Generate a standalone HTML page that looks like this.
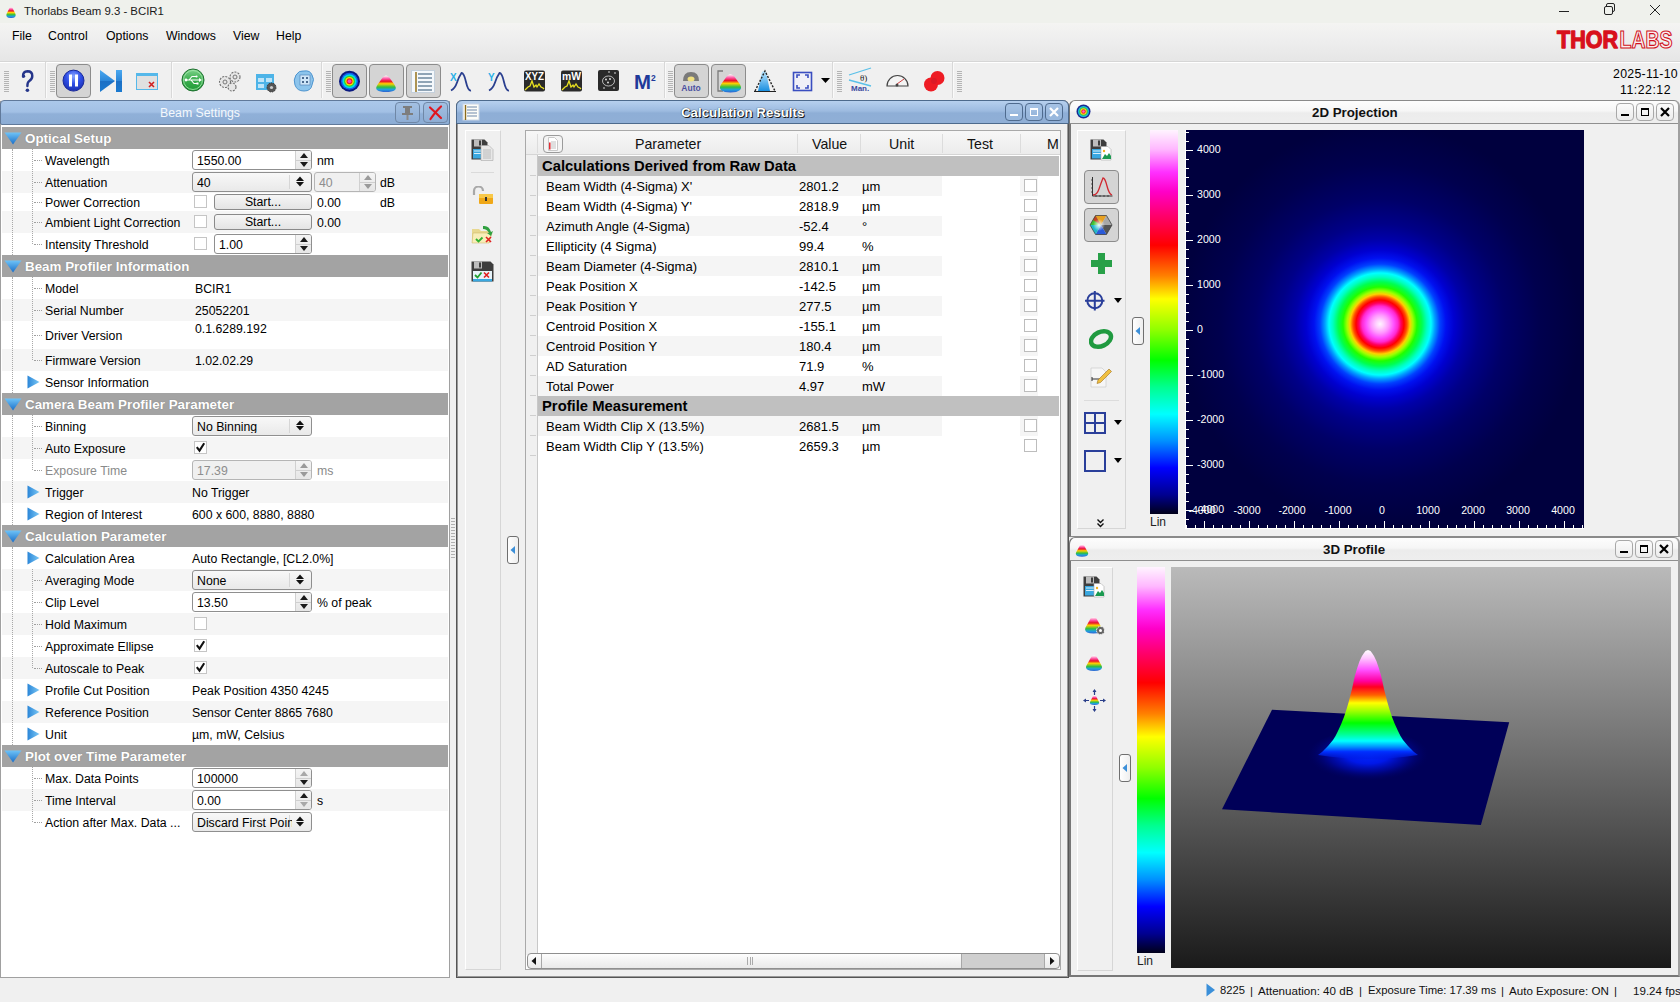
<!DOCTYPE html><html><head><meta charset="utf-8"><style>
*{margin:0;padding:0;box-sizing:border-box}
html,body{width:1680px;height:1002px;overflow:hidden;background:#f0f0f0;font-family:"Liberation Sans",sans-serif;color:#000}
.ab{position:absolute}
.t{position:absolute;white-space:nowrap;line-height:1}
#titlebar{left:0;top:0;width:1680px;height:23px;background:#eff1ec}
#menubar{left:0;top:23px;width:1680px;height:38px;background:linear-gradient(#f4f4f2,#eeeeee 45%,#e6e6e6)}
#toolbar{left:0;top:61px;width:1680px;height:40px;background:#f0f0f0;border-top:1px solid #d6d6d6;box-shadow:inset 0 1px 0 #fff}
.mi{position:absolute;top:30px;font-size:12.3px;color:#000}
.grip{position:absolute;width:5px;background:repeating-linear-gradient(#b0b0b0 0 1px,transparent 1px 3px)}
.tsep{position:absolute;width:1px;top:64px;height:33px;background:#d4d4d4;border-right:1px solid #fff}
.tbtn{position:absolute;top:64px;width:35px;height:34px;border:1px solid #a9a9a9;border-radius:4px;background:linear-gradient(#dcdcdc,#d2d2d2)}
.sec{position:absolute;left:2px;width:446px;height:22px;background:#a3a3a3}
.sec .st{position:absolute;left:23px;top:5px;font-size:13.4px;font-weight:bold;color:#fff;text-shadow:0 0 1px #777}
.row{position:absolute;left:2px;width:446px}
.lab{position:absolute;left:45px;font-size:12.3px;color:#000;white-space:nowrap}
.val{position:absolute;font-size:12.3px;white-space:nowrap}
.box{position:absolute;border:1px solid #8f8f8f;border-radius:3px;background:#fff}
.cb{position:absolute;width:13px;height:13px;border:1px solid #c5c5c5;background:#fff}
.btn{position:absolute;border:1px solid #8a8a8a;border-radius:3px;background:linear-gradient(#f6f6f6,#e4e4e4);font-size:12.3px;text-align:center}
</style></head><body>
<div id="titlebar" class="ab"></div>
<div class="t" style="left:24px;top:6px;font-size:11.4px;color:#1a1a1a">Thorlabs Beam 9.3 - BCIR1</div>
<svg class="ab" style="left:1550px;top:0" width="130" height="23"><path d="M9 11.5h10" stroke="#222" stroke-width="1"/><rect x="54.5" y="6.5" width="8" height="8" rx="1.5" fill="none" stroke="#222"/><path d="M56.5 6.5v-1.5a1.5 1.5 0 0 1 1.5-1.5h5a1.5 1.5 0 0 1 1.5 1.5v5a1.5 1.5 0 0 1-1.5 1.5h-.5" fill="none" stroke="#222"/><path d="M100 5l10 10M110 5l-10 10" stroke="#222" stroke-width="1"/></svg>
<div id="menubar" class="ab"></div>
<div class="t mi" style="left:12px">File</div>
<div class="t mi" style="left:48px">Control</div>
<div class="t mi" style="left:106px">Options</div>
<div class="t mi" style="left:166px">Windows</div>
<div class="t mi" style="left:233px">View</div>
<div class="t mi" style="left:276px">Help</div>
<div id="toolbar" class="ab"></div>
<div class="t" style="right:2px;top:68px;font-size:12.3px;letter-spacing:0.3px">2025-11-10</div>
<div class="t" style="right:9px;top:84px;font-size:12.3px;letter-spacing:0.5px">11:22:12</div>
<div class="ab" style="left:0;top:101px;width:450px;height:877px;background:#fff;border:1px solid #a0a0a0;border-top:none"></div>
<div class="ab" style="left:0;top:100px;width:450px;height:25px;border:1px solid #60799a;border-radius:4px 4px 2px 2px;background:linear-gradient(#abc8ea,#a2c0e5 48%,#90b0d8 56%,#8cadd5)"></div>
<div class="t" style="left:160px;top:107px;font-size:12.3px;color:#f4f8fc">Beam Settings</div>
<div class="sec" style="top:127px"><div class="st t">Optical Setup</div></div>
<svg class="ab" style="left:4px;top:132px" width="18" height="13"><defs><linearGradient id="tg127" x1="0" y1="0" x2="0" y2="1"><stop offset="0" stop-color="#6fc3f7"/><stop offset="1" stop-color="#1a6fc9"/></linearGradient></defs><path d="M0.5 0.5h17L9 12.5z" fill="url(#tg127)"/></svg>
<div class="row" style="top:149px;height:22px;background:#fff"></div>
<div class="t lab" style="top:155px;color:#000">Wavelength</div>
<div class="ab" style="left:34px;top:160px;width:8px;border-top:1px dotted #a0a0a0"></div>
<div class="row" style="top:171px;height:22px;background:#f5f5f5"></div>
<div class="t lab" style="top:177px;color:#000">Attenuation</div>
<div class="ab" style="left:34px;top:182px;width:8px;border-top:1px dotted #a0a0a0"></div>
<div class="row" style="top:193px;height:18px;background:#fff"></div>
<div class="t lab" style="top:197px;color:#000">Power Correction</div>
<div class="ab" style="left:34px;top:202px;width:8px;border-top:1px dotted #a0a0a0"></div>
<div class="row" style="top:211px;height:22px;background:#f5f5f5"></div>
<div class="t lab" style="top:217px;color:#000">Ambient Light Correction</div>
<div class="ab" style="left:34px;top:222px;width:8px;border-top:1px dotted #a0a0a0"></div>
<div class="row" style="top:233px;height:22px;background:#fff"></div>
<div class="t lab" style="top:239px;color:#000">Intensity Threshold</div>
<div class="ab" style="left:34px;top:244px;width:8px;border-top:1px dotted #a0a0a0"></div>
<div class="sec" style="top:255px"><div class="st t">Beam Profiler Information</div></div>
<svg class="ab" style="left:4px;top:260px" width="18" height="13"><defs><linearGradient id="tg255" x1="0" y1="0" x2="0" y2="1"><stop offset="0" stop-color="#6fc3f7"/><stop offset="1" stop-color="#1a6fc9"/></linearGradient></defs><path d="M0.5 0.5h17L9 12.5z" fill="url(#tg255)"/></svg>
<div class="row" style="top:277px;height:22px;background:#fff"></div>
<div class="t lab" style="top:283px;color:#000">Model</div>
<div class="ab" style="left:34px;top:288px;width:8px;border-top:1px dotted #a0a0a0"></div>
<div class="row" style="top:299px;height:22px;background:#f5f5f5"></div>
<div class="t lab" style="top:305px;color:#000">Serial Number</div>
<div class="ab" style="left:34px;top:310px;width:8px;border-top:1px dotted #a0a0a0"></div>
<div class="row" style="top:321px;height:28px;background:#fff"></div>
<div class="t lab" style="top:330px;color:#000">Driver Version</div>
<div class="ab" style="left:34px;top:335px;width:8px;border-top:1px dotted #a0a0a0"></div>
<div class="row" style="top:349px;height:22px;background:#f5f5f5"></div>
<div class="t lab" style="top:355px;color:#000">Firmware Version</div>
<div class="ab" style="left:34px;top:360px;width:8px;border-top:1px dotted #a0a0a0"></div>
<div class="row" style="top:371px;height:22px;background:#fff"></div>
<div class="t lab" style="top:377px;color:#000">Sensor Information</div>
<svg class="ab" style="left:27px;top:375px" width="13" height="14"><defs><linearGradient id="eg371" x1="0" y1="0" x2="1" y2="0"><stop offset="0" stop-color="#2a86d8"/><stop offset="1" stop-color="#7cc8f5"/></linearGradient></defs><path d="M0.5 0.5L12.5 7L0.5 13.5z" fill="url(#eg371)"/></svg>
<div class="sec" style="top:393px"><div class="st t">Camera Beam Profiler Parameter</div></div>
<svg class="ab" style="left:4px;top:398px" width="18" height="13"><defs><linearGradient id="tg393" x1="0" y1="0" x2="0" y2="1"><stop offset="0" stop-color="#6fc3f7"/><stop offset="1" stop-color="#1a6fc9"/></linearGradient></defs><path d="M0.5 0.5h17L9 12.5z" fill="url(#tg393)"/></svg>
<div class="row" style="top:415px;height:22px;background:#fff"></div>
<div class="t lab" style="top:421px;color:#000">Binning</div>
<div class="ab" style="left:34px;top:426px;width:8px;border-top:1px dotted #a0a0a0"></div>
<div class="row" style="top:437px;height:22px;background:#f5f5f5"></div>
<div class="t lab" style="top:443px;color:#000">Auto Exposure</div>
<div class="ab" style="left:34px;top:448px;width:8px;border-top:1px dotted #a0a0a0"></div>
<div class="row" style="top:459px;height:22px;background:#fff"></div>
<div class="t lab" style="top:465px;color:#8a8a8a">Exposure Time</div>
<div class="ab" style="left:34px;top:470px;width:8px;border-top:1px dotted #a0a0a0"></div>
<div class="row" style="top:481px;height:22px;background:#f5f5f5"></div>
<div class="t lab" style="top:487px;color:#000">Trigger</div>
<svg class="ab" style="left:27px;top:485px" width="13" height="14"><defs><linearGradient id="eg481" x1="0" y1="0" x2="1" y2="0"><stop offset="0" stop-color="#2a86d8"/><stop offset="1" stop-color="#7cc8f5"/></linearGradient></defs><path d="M0.5 0.5L12.5 7L0.5 13.5z" fill="url(#eg481)"/></svg>
<div class="row" style="top:503px;height:22px;background:#fff"></div>
<div class="t lab" style="top:509px;color:#000">Region of Interest</div>
<svg class="ab" style="left:27px;top:507px" width="13" height="14"><defs><linearGradient id="eg503" x1="0" y1="0" x2="1" y2="0"><stop offset="0" stop-color="#2a86d8"/><stop offset="1" stop-color="#7cc8f5"/></linearGradient></defs><path d="M0.5 0.5L12.5 7L0.5 13.5z" fill="url(#eg503)"/></svg>
<div class="sec" style="top:525px"><div class="st t">Calculation Parameter</div></div>
<svg class="ab" style="left:4px;top:530px" width="18" height="13"><defs><linearGradient id="tg525" x1="0" y1="0" x2="0" y2="1"><stop offset="0" stop-color="#6fc3f7"/><stop offset="1" stop-color="#1a6fc9"/></linearGradient></defs><path d="M0.5 0.5h17L9 12.5z" fill="url(#tg525)"/></svg>
<div class="row" style="top:547px;height:22px;background:#fff"></div>
<div class="t lab" style="top:553px;color:#000">Calculation Area</div>
<svg class="ab" style="left:27px;top:551px" width="13" height="14"><defs><linearGradient id="eg547" x1="0" y1="0" x2="1" y2="0"><stop offset="0" stop-color="#2a86d8"/><stop offset="1" stop-color="#7cc8f5"/></linearGradient></defs><path d="M0.5 0.5L12.5 7L0.5 13.5z" fill="url(#eg547)"/></svg>
<div class="row" style="top:569px;height:22px;background:#f5f5f5"></div>
<div class="t lab" style="top:575px;color:#000">Averaging Mode</div>
<div class="ab" style="left:34px;top:580px;width:8px;border-top:1px dotted #a0a0a0"></div>
<div class="row" style="top:591px;height:22px;background:#fff"></div>
<div class="t lab" style="top:597px;color:#000">Clip Level</div>
<div class="ab" style="left:34px;top:602px;width:8px;border-top:1px dotted #a0a0a0"></div>
<div class="row" style="top:613px;height:22px;background:#f5f5f5"></div>
<div class="t lab" style="top:619px;color:#000">Hold Maximum</div>
<div class="ab" style="left:34px;top:624px;width:8px;border-top:1px dotted #a0a0a0"></div>
<div class="row" style="top:635px;height:22px;background:#fff"></div>
<div class="t lab" style="top:641px;color:#000">Approximate Ellipse</div>
<div class="ab" style="left:34px;top:646px;width:8px;border-top:1px dotted #a0a0a0"></div>
<div class="row" style="top:657px;height:22px;background:#f5f5f5"></div>
<div class="t lab" style="top:663px;color:#000">Autoscale to Peak</div>
<div class="ab" style="left:34px;top:668px;width:8px;border-top:1px dotted #a0a0a0"></div>
<div class="row" style="top:679px;height:22px;background:#fff"></div>
<div class="t lab" style="top:685px;color:#000">Profile Cut Position</div>
<svg class="ab" style="left:27px;top:683px" width="13" height="14"><defs><linearGradient id="eg679" x1="0" y1="0" x2="1" y2="0"><stop offset="0" stop-color="#2a86d8"/><stop offset="1" stop-color="#7cc8f5"/></linearGradient></defs><path d="M0.5 0.5L12.5 7L0.5 13.5z" fill="url(#eg679)"/></svg>
<div class="row" style="top:701px;height:22px;background:#f5f5f5"></div>
<div class="t lab" style="top:707px;color:#000">Reference Position</div>
<svg class="ab" style="left:27px;top:705px" width="13" height="14"><defs><linearGradient id="eg701" x1="0" y1="0" x2="1" y2="0"><stop offset="0" stop-color="#2a86d8"/><stop offset="1" stop-color="#7cc8f5"/></linearGradient></defs><path d="M0.5 0.5L12.5 7L0.5 13.5z" fill="url(#eg701)"/></svg>
<div class="row" style="top:723px;height:22px;background:#fff"></div>
<div class="t lab" style="top:729px;color:#000">Unit</div>
<svg class="ab" style="left:27px;top:727px" width="13" height="14"><defs><linearGradient id="eg723" x1="0" y1="0" x2="1" y2="0"><stop offset="0" stop-color="#2a86d8"/><stop offset="1" stop-color="#7cc8f5"/></linearGradient></defs><path d="M0.5 0.5L12.5 7L0.5 13.5z" fill="url(#eg723)"/></svg>
<div class="sec" style="top:745px"><div class="st t">Plot over Time Parameter</div></div>
<svg class="ab" style="left:4px;top:750px" width="18" height="13"><defs><linearGradient id="tg745" x1="0" y1="0" x2="0" y2="1"><stop offset="0" stop-color="#6fc3f7"/><stop offset="1" stop-color="#1a6fc9"/></linearGradient></defs><path d="M0.5 0.5h17L9 12.5z" fill="url(#tg745)"/></svg>
<div class="row" style="top:767px;height:22px;background:#fff"></div>
<div class="t lab" style="top:773px;color:#000">Max. Data Points</div>
<div class="ab" style="left:34px;top:778px;width:8px;border-top:1px dotted #a0a0a0"></div>
<div class="row" style="top:789px;height:22px;background:#f5f5f5"></div>
<div class="t lab" style="top:795px;color:#000">Time Interval</div>
<div class="ab" style="left:34px;top:800px;width:8px;border-top:1px dotted #a0a0a0"></div>
<div class="row" style="top:811px;height:22px;background:#fff"></div>
<div class="t lab" style="top:817px;color:#000">Action after Max. Data ...</div>
<div class="ab" style="left:34px;top:822px;width:8px;border-top:1px dotted #a0a0a0"></div>
<div class="box" style="left:192px;top:150px;width:120px;height:20px;background:#fff;border-color:#8f8f8f"></div>
<div class="ab" style="left:295px;top:151px;width:16px;height:18px;border-left:1px solid #d0d0d0;background:linear-gradient(#f4f4f4,#e6e6e6);border-radius:0 2px 2px 0"></div>
<div class="ab" style="left:296px;top:160px;width:15px;border-top:1px solid #cfcfcf"></div>
<svg class="ab" style="left:299px;top:150px" width="10" height="20"><path d="M1 8L5 3L9 8z" fill="#1a1a1a"/><path d="M1 12L5 17L9 12z" fill="#1a1a1a"/></svg>
<div class="t val" style="left:197px;top:155px;color:#000">1550.00</div>
<div class="t val" style="left:317px;top:155px;color:#000;font-size:12.3px;">nm</div>
<div class="box" style="left:192px;top:172px;width:120px;height:20px;background:linear-gradient(#f8f8f8,#e9e9e9);border-color:#8f8f8f"></div>
<div class="ab" style="left:289px;top:175px;height:14px;border-left:1px solid #d6d6d6"></div>
<svg class="ab" style="left:295px;top:176px" width="10" height="12"><path d="M1 5L5 0.5L9 5z" fill="#111"/><path d="M1 6L5 10.5L9 6z" fill="#111"/></svg>
<div class="t val" style="left:197px;top:177px;overflow:hidden;width:95px">40</div>
<div class="box" style="left:314px;top:172px;width:62px;height:20px;background:#f0f0f0;border-color:#b5b5b5"></div>
<div class="ab" style="left:359px;top:173px;width:16px;height:18px;border-left:1px solid #d0d0d0;background:linear-gradient(#f4f4f4,#e6e6e6);border-radius:0 2px 2px 0"></div>
<div class="ab" style="left:360px;top:182px;width:15px;border-top:1px solid #cfcfcf"></div>
<svg class="ab" style="left:363px;top:172px" width="10" height="20"><path d="M1 8L5 3L9 8z" fill="#9a9a9a"/><path d="M1 12L5 17L9 12z" fill="#9a9a9a"/></svg>
<div class="t val" style="left:319px;top:177px;color:#8d8d8d">40</div>
<div class="t val" style="left:380px;top:177px;color:#000;font-size:12.3px;">dB</div>
<div class="cb" style="left:194px;top:195px"></div>
<div class="btn t" style="left:214px;top:194px;width:98px;height:16px;line-height:14px">Start...</div>
<div class="t val" style="left:317px;top:197px;color:#000;font-size:12.3px;">0.00</div>
<div class="t val" style="left:380px;top:197px;color:#000;font-size:12.3px;">dB</div>
<div class="cb" style="left:194px;top:215px"></div>
<div class="btn t" style="left:214px;top:214px;width:98px;height:16px;line-height:14px">Start...</div>
<div class="t val" style="left:317px;top:217px;color:#000;font-size:12.3px;">0.00</div>
<div class="cb" style="left:194px;top:237px"></div>
<div class="box" style="left:214px;top:234px;width:98px;height:20px;background:#fff;border-color:#8f8f8f"></div>
<div class="ab" style="left:295px;top:235px;width:16px;height:18px;border-left:1px solid #d0d0d0;background:linear-gradient(#f4f4f4,#e6e6e6);border-radius:0 2px 2px 0"></div>
<div class="ab" style="left:296px;top:244px;width:15px;border-top:1px solid #cfcfcf"></div>
<svg class="ab" style="left:299px;top:234px" width="10" height="20"><path d="M1 8L5 3L9 8z" fill="#1a1a1a"/><path d="M1 12L5 17L9 12z" fill="#1a1a1a"/></svg>
<div class="t val" style="left:219px;top:239px;color:#000">1.00</div>
<div class="t val" style="left:195px;top:283px;color:#000;font-size:12.3px;">BCIR1</div>
<div class="t val" style="left:195px;top:305px;color:#000;font-size:12.3px;">25052201</div>
<div class="t val" style="left:195px;top:323px;color:#000;font-size:12.3px;">0.1.6289.192</div>
<div class="t val" style="left:195px;top:355px;color:#000;font-size:12.3px;">1.02.02.29</div>
<div class="box" style="left:192px;top:416px;width:120px;height:20px;background:linear-gradient(#f8f8f8,#e9e9e9);border-color:#8f8f8f"></div>
<div class="ab" style="left:289px;top:419px;height:14px;border-left:1px solid #d6d6d6"></div>
<svg class="ab" style="left:295px;top:420px" width="10" height="12"><path d="M1 5L5 0.5L9 5z" fill="#111"/><path d="M1 6L5 10.5L9 6z" fill="#111"/></svg>
<div class="t val" style="left:197px;top:421px;overflow:hidden;width:95px">No Binning</div>
<div class="cb" style="left:194px;top:441px"></div>
<svg class="ab" style="left:194px;top:441px" width="13" height="13"><path d="M2.8 6.2L5.5 9.6L10.2 2.3" stroke="#111" stroke-width="2.1" fill="none"/></svg>
<div class="box" style="left:192px;top:460px;width:120px;height:20px;background:#f0f0f0;border-color:#b5b5b5"></div>
<div class="ab" style="left:295px;top:461px;width:16px;height:18px;border-left:1px solid #d0d0d0;background:linear-gradient(#f4f4f4,#e6e6e6);border-radius:0 2px 2px 0"></div>
<div class="ab" style="left:296px;top:470px;width:15px;border-top:1px solid #cfcfcf"></div>
<svg class="ab" style="left:299px;top:460px" width="10" height="20"><path d="M1 8L5 3L9 8z" fill="#9a9a9a"/><path d="M1 12L5 17L9 12z" fill="#9a9a9a"/></svg>
<div class="t val" style="left:197px;top:465px;color:#8d8d8d">17.39</div>
<div class="t val" style="left:317px;top:465px;color:#8a8a8a;font-size:12.3px;">ms</div>
<div class="t val" style="left:192px;top:487px;color:#000;font-size:12.3px;">No Trigger</div>
<div class="t val" style="left:192px;top:509px;color:#000;font-size:12.3px;">600 x 600, 8880, 8880</div>
<div class="t val" style="left:192px;top:553px;color:#000;font-size:12.3px;">Auto Rectangle, [CL2.0%]</div>
<div class="box" style="left:192px;top:570px;width:120px;height:20px;background:linear-gradient(#f8f8f8,#e9e9e9);border-color:#8f8f8f"></div>
<div class="ab" style="left:289px;top:573px;height:14px;border-left:1px solid #d6d6d6"></div>
<svg class="ab" style="left:295px;top:574px" width="10" height="12"><path d="M1 5L5 0.5L9 5z" fill="#111"/><path d="M1 6L5 10.5L9 6z" fill="#111"/></svg>
<div class="t val" style="left:197px;top:575px;overflow:hidden;width:95px">None</div>
<div class="box" style="left:192px;top:592px;width:120px;height:20px;background:#fff;border-color:#8f8f8f"></div>
<div class="ab" style="left:295px;top:593px;width:16px;height:18px;border-left:1px solid #d0d0d0;background:linear-gradient(#f4f4f4,#e6e6e6);border-radius:0 2px 2px 0"></div>
<div class="ab" style="left:296px;top:602px;width:15px;border-top:1px solid #cfcfcf"></div>
<svg class="ab" style="left:299px;top:592px" width="10" height="20"><path d="M1 8L5 3L9 8z" fill="#1a1a1a"/><path d="M1 12L5 17L9 12z" fill="#1a1a1a"/></svg>
<div class="t val" style="left:197px;top:597px;color:#000">13.50</div>
<div class="t val" style="left:317px;top:597px;color:#000;font-size:12.3px;">% of peak</div>
<div class="cb" style="left:194px;top:617px"></div>
<div class="cb" style="left:194px;top:639px"></div>
<svg class="ab" style="left:194px;top:639px" width="13" height="13"><path d="M2.8 6.2L5.5 9.6L10.2 2.3" stroke="#111" stroke-width="2.1" fill="none"/></svg>
<div class="cb" style="left:194px;top:661px"></div>
<svg class="ab" style="left:194px;top:661px" width="13" height="13"><path d="M2.8 6.2L5.5 9.6L10.2 2.3" stroke="#111" stroke-width="2.1" fill="none"/></svg>
<div class="t val" style="left:192px;top:685px;color:#000;font-size:12.3px;">Peak Position 4350 4245</div>
<div class="t val" style="left:192px;top:707px;color:#000;font-size:12.3px;">Sensor Center 8865 7680</div>
<div class="t val" style="left:192px;top:729px;color:#000;font-size:12.3px;">µm, mW, Celsius</div>
<div class="box" style="left:192px;top:768px;width:120px;height:20px;background:#fff;border-color:#8f8f8f"></div>
<div class="ab" style="left:295px;top:769px;width:16px;height:18px;border-left:1px solid #d0d0d0;background:linear-gradient(#f4f4f4,#e6e6e6);border-radius:0 2px 2px 0"></div>
<div class="ab" style="left:296px;top:778px;width:15px;border-top:1px solid #cfcfcf"></div>
<svg class="ab" style="left:299px;top:768px" width="10" height="20"><path d="M1 8L5 3L9 8z" fill="#a8a8a8"/><path d="M1 12L5 17L9 12z" fill="#1a1a1a"/></svg>
<div class="t val" style="left:197px;top:773px;color:#000">100000</div>
<div class="box" style="left:192px;top:790px;width:120px;height:20px;background:#fff;border-color:#8f8f8f"></div>
<div class="ab" style="left:295px;top:791px;width:16px;height:18px;border-left:1px solid #d0d0d0;background:linear-gradient(#f4f4f4,#e6e6e6);border-radius:0 2px 2px 0"></div>
<div class="ab" style="left:296px;top:800px;width:15px;border-top:1px solid #cfcfcf"></div>
<svg class="ab" style="left:299px;top:790px" width="10" height="20"><path d="M1 8L5 3L9 8z" fill="#1a1a1a"/><path d="M1 12L5 17L9 12z" fill="#a8a8a8"/></svg>
<div class="t val" style="left:197px;top:795px;color:#000">0.00</div>
<div class="t val" style="left:317px;top:795px;color:#000;font-size:12.3px;">s</div>
<div class="box" style="left:192px;top:812px;width:120px;height:20px;background:linear-gradient(#f8f8f8,#e9e9e9);border-color:#8f8f8f"></div>
<div class="ab" style="left:289px;top:815px;height:14px;border-left:1px solid #d6d6d6"></div>
<svg class="ab" style="left:295px;top:816px" width="10" height="12"><path d="M1 5L5 0.5L9 5z" fill="#111"/><path d="M1 6L5 10.5L9 6z" fill="#111"/></svg>
<div class="t val" style="left:197px;top:817px;overflow:hidden;width:95px">Discard First Point</div>
<div class="ab" style="left:12px;top:149px;height:106px;border-left:1px dotted #a8a8a8"></div>
<div class="ab" style="left:32px;top:149px;height:95px;border-left:1px dotted #a8a8a8"></div>
<div class="ab" style="left:12px;top:277px;height:116px;border-left:1px dotted #a8a8a8"></div>
<div class="ab" style="left:32px;top:277px;height:83px;border-left:1px dotted #a8a8a8"></div>
<div class="ab" style="left:12px;top:415px;height:110px;border-left:1px dotted #a8a8a8"></div>
<div class="ab" style="left:32px;top:415px;height:55px;border-left:1px dotted #a8a8a8"></div>
<div class="ab" style="left:12px;top:547px;height:198px;border-left:1px dotted #a8a8a8"></div>
<div class="ab" style="left:32px;top:569px;height:99px;border-left:1px dotted #a8a8a8"></div>
<div class="ab" style="left:32px;top:767px;height:55px;border-left:1px dotted #a8a8a8"></div>
<div class="ab" style="left:395px;top:102px;width:25px;height:21px;border:1px solid #6f87a6;border-radius:4px;background:linear-gradient(#a3c0e2,#8eadd4)"></div>
<svg class="ab" style="left:399px;top:104px" width="17" height="17"><path d="M4 2h9v2h-2v5h3v2H3V9h3V4H4z" fill="#7d7d7d"/><path d="M8.5 11v5" stroke="#8a8a8a" stroke-width="2"/></svg>
<div class="ab" style="left:423px;top:102px;width:25px;height:21px;border:1px solid #6f87a6;border-radius:4px;background:linear-gradient(#a3c0e2,#8eadd4)"></div>
<svg class="ab" style="left:427px;top:104px" width="17" height="17"><path d="M3 3.5Q8 8 14 14M14 2.5Q9 7 3.5 15" stroke="#e0161e" stroke-width="2.2" fill="none" stroke-linecap="round"/></svg>
<div class="grip" style="left:451px;top:518px;height:40px;width:4px"></div>
<div class="ab" style="left:456px;top:100px;width:613px;height:878px;background:#f0f0f0;border:1px solid #555;border-top:none;box-shadow:inset 1px -1px 0 #9a9a9a,inset -1px 0 0 #9a9a9a;border-radius:6px 6px 0 0"></div>
<div class="ab" style="left:456px;top:100px;width:613px;height:24px;border:1px solid #4d6a8c;border-radius:6px 6px 0 0;background:linear-gradient(#b6d0ee,#9dbbe0 45%,#8eaed6 55%,#90afd6)"></div>
<div class="t" style="left:681px;top:106px;font-size:13.3px;font-weight:bold;color:#fff;text-shadow:1px 1px 0 #1a1a1a,0 0 1px #000">Calculation Results</div>
<svg class="ab" style="left:462px;top:103px" width="18" height="18"><rect x="1" y="1" width="16" height="16" fill="#fdfdf8" stroke="#c9d6e6"/><path d="M5 4h10M5 7h10M5 10h10M5 13h10" stroke="#9fb0c4" stroke-width="1.5"/><path d="M3.5 2v15" stroke="#8b6a1a" stroke-width="1.4"/></svg>
<div class="ab" style="left:1005px;top:103px;width:18px;height:18px;border:1px solid #4f6b8e;border-radius:4px;background:rgba(160,190,225,.6)"></div>
<div class="ab" style="left:1010px;top:114px;width:8px;height:2px;background:#fff"></div>
<div class="ab" style="left:1025px;top:103px;width:18px;height:18px;border:1px solid #4f6b8e;border-radius:4px;background:rgba(160,190,225,.6)"></div>
<div class="ab" style="left:1030px;top:108px;width:8px;height:8px;border:1.5px solid #fff;border-top-width:2.5px"></div>
<div class="ab" style="left:1045px;top:103px;width:18px;height:18px;border:1px solid #4f6b8e;border-radius:4px;background:rgba(160,190,225,.6)"></div>
<svg class="ab" style="left:1045px;top:103px" width="18" height="18"><path d="M5 5l8 8M13 5l-8 8" stroke="#fff" stroke-width="2.2"/></svg>
<div class="ab" style="left:465px;top:130px;width:36px;height:840px;border:1px solid #d6d6d6;border-left-color:#fff;border-top-color:#fff;background:#f0f0f0"></div>
<div class="ab" style="left:507px;top:536px;width:12px;height:28px;border:1px solid #6f6f6f;border-radius:3px;background:linear-gradient(90deg,#fff,#eee)"></div>
<svg class="ab" style="left:509px;top:545px" width="8" height="10"><path d="M6 1L1.5 5L6 9z" fill="#3c8fd8"/></svg>
<div class="ab" style="left:525px;top:130px;width:536px;height:840px;border:1px solid #a9a9a9;background:#fff"></div>
<div class="ab" style="left:526px;top:131px;width:534px;height:24px;background:linear-gradient(#f7f7f7,#ececec);border-bottom:1px solid #d5d5d5"></div>
<div class="ab" style="left:526px;top:155px;width:12px;height:800px;background:#f0f0f0;border-right:1px solid #c8c8c8"></div>
<div class="ab" style="left:537px;top:134px;height:19px;border-left:1px solid #dcdcdc"></div>
<div class="ab" style="left:797px;top:134px;height:19px;border-left:1px solid #dcdcdc"></div>
<div class="ab" style="left:860px;top:134px;height:19px;border-left:1px solid #dcdcdc"></div>
<div class="ab" style="left:942px;top:134px;height:19px;border-left:1px solid #dcdcdc"></div>
<div class="ab" style="left:1020px;top:134px;height:19px;border-left:1px solid #dcdcdc"></div>
<div class="ab" style="left:543px;top:135px;width:20px;height:18px;border:1px solid #9b9b9b;border-radius:4px;background:#f4f4f4"></div>
<svg class="ab" style="left:545px;top:136px" width="16" height="16"><path d="M3.5 1.5h6l3 3v10h-9z" fill="#fff" stroke="#c8c8c8"/><path d="M6 6h5M6 8h5M6 10h5M6 12h5" stroke="#c0c0c0"/><path d="M4.8 6.5v7" stroke="#e0161e" stroke-width="1.4"/></svg>
<div class="t" style="left:635px;top:137px;font-size:14.2px;color:#111">Parameter</div>
<div class="t" style="left:812px;top:137px;font-size:14.2px;color:#111">Value</div>
<div class="t" style="left:889px;top:137px;font-size:14.2px;color:#111">Unit</div>
<div class="t" style="left:967px;top:137px;font-size:14.2px;color:#111">Test</div>
<div class="t" style="left:1047px;top:137px;font-size:14.2px;color:#111">M</div>
<div class="ab" style="left:538px;top:156px;width:521px;height:20px;background:#c0c0c0"></div>
<div class="t" style="left:542px;top:159px;font-size:14.8px;font-weight:bold;color:#000">Calculations Derived from Raw Data</div>
<div class="ab" style="left:530px;top:175px;width:6px;border-top:1px solid #cfcfcf"></div>
<div class="ab" style="left:538px;top:176px;width:404px;height:20px;background:#f5f5f5"></div>
<div class="ab" style="left:1020px;top:176px;width:18px;height:20px;background:#f5f5f5"></div>
<div class="t" style="left:546px;top:180px;font-size:13px">Beam Width (4-Sigma) X'</div>
<div class="t" style="left:799px;top:180px;font-size:13px">2801.2</div>
<div class="t" style="left:862px;top:180px;font-size:13px">µm</div>
<div class="ab" style="left:1024px;top:179px;width:13px;height:13px;border:1px solid #bdbdbd;background:#fff"></div>
<div class="ab" style="left:530px;top:195px;width:6px;border-top:1px solid #cfcfcf"></div>
<div class="ab" style="left:538px;top:196px;width:404px;height:20px;background:#fff"></div>
<div class="ab" style="left:1020px;top:196px;width:18px;height:20px;background:#fff"></div>
<div class="t" style="left:546px;top:200px;font-size:13px">Beam Width (4-Sigma) Y'</div>
<div class="t" style="left:799px;top:200px;font-size:13px">2818.9</div>
<div class="t" style="left:862px;top:200px;font-size:13px">µm</div>
<div class="ab" style="left:1024px;top:199px;width:13px;height:13px;border:1px solid #bdbdbd;background:#fff"></div>
<div class="ab" style="left:530px;top:215px;width:6px;border-top:1px solid #cfcfcf"></div>
<div class="ab" style="left:538px;top:216px;width:404px;height:20px;background:#f5f5f5"></div>
<div class="ab" style="left:1020px;top:216px;width:18px;height:20px;background:#f5f5f5"></div>
<div class="t" style="left:546px;top:220px;font-size:13px">Azimuth Angle (4-Sigma)</div>
<div class="t" style="left:799px;top:220px;font-size:13px">-52.4</div>
<div class="t" style="left:862px;top:220px;font-size:13px">°</div>
<div class="ab" style="left:1024px;top:219px;width:13px;height:13px;border:1px solid #bdbdbd;background:#fff"></div>
<div class="ab" style="left:530px;top:235px;width:6px;border-top:1px solid #cfcfcf"></div>
<div class="ab" style="left:538px;top:236px;width:404px;height:20px;background:#fff"></div>
<div class="ab" style="left:1020px;top:236px;width:18px;height:20px;background:#fff"></div>
<div class="t" style="left:546px;top:240px;font-size:13px">Ellipticity (4 Sigma)</div>
<div class="t" style="left:799px;top:240px;font-size:13px">99.4</div>
<div class="t" style="left:862px;top:240px;font-size:13px">%</div>
<div class="ab" style="left:1024px;top:239px;width:13px;height:13px;border:1px solid #bdbdbd;background:#fff"></div>
<div class="ab" style="left:530px;top:255px;width:6px;border-top:1px solid #cfcfcf"></div>
<div class="ab" style="left:538px;top:256px;width:404px;height:20px;background:#f5f5f5"></div>
<div class="ab" style="left:1020px;top:256px;width:18px;height:20px;background:#f5f5f5"></div>
<div class="t" style="left:546px;top:260px;font-size:13px">Beam Diameter (4-Sigma)</div>
<div class="t" style="left:799px;top:260px;font-size:13px">2810.1</div>
<div class="t" style="left:862px;top:260px;font-size:13px">µm</div>
<div class="ab" style="left:1024px;top:259px;width:13px;height:13px;border:1px solid #bdbdbd;background:#fff"></div>
<div class="ab" style="left:530px;top:275px;width:6px;border-top:1px solid #cfcfcf"></div>
<div class="ab" style="left:538px;top:276px;width:404px;height:20px;background:#fff"></div>
<div class="ab" style="left:1020px;top:276px;width:18px;height:20px;background:#fff"></div>
<div class="t" style="left:546px;top:280px;font-size:13px">Peak Position X</div>
<div class="t" style="left:799px;top:280px;font-size:13px">-142.5</div>
<div class="t" style="left:862px;top:280px;font-size:13px">µm</div>
<div class="ab" style="left:1024px;top:279px;width:13px;height:13px;border:1px solid #bdbdbd;background:#fff"></div>
<div class="ab" style="left:530px;top:295px;width:6px;border-top:1px solid #cfcfcf"></div>
<div class="ab" style="left:538px;top:296px;width:404px;height:20px;background:#f5f5f5"></div>
<div class="ab" style="left:1020px;top:296px;width:18px;height:20px;background:#f5f5f5"></div>
<div class="t" style="left:546px;top:300px;font-size:13px">Peak Position Y</div>
<div class="t" style="left:799px;top:300px;font-size:13px">277.5</div>
<div class="t" style="left:862px;top:300px;font-size:13px">µm</div>
<div class="ab" style="left:1024px;top:299px;width:13px;height:13px;border:1px solid #bdbdbd;background:#fff"></div>
<div class="ab" style="left:530px;top:315px;width:6px;border-top:1px solid #cfcfcf"></div>
<div class="ab" style="left:538px;top:316px;width:404px;height:20px;background:#fff"></div>
<div class="ab" style="left:1020px;top:316px;width:18px;height:20px;background:#fff"></div>
<div class="t" style="left:546px;top:320px;font-size:13px">Centroid Position X</div>
<div class="t" style="left:799px;top:320px;font-size:13px">-155.1</div>
<div class="t" style="left:862px;top:320px;font-size:13px">µm</div>
<div class="ab" style="left:1024px;top:319px;width:13px;height:13px;border:1px solid #bdbdbd;background:#fff"></div>
<div class="ab" style="left:530px;top:335px;width:6px;border-top:1px solid #cfcfcf"></div>
<div class="ab" style="left:538px;top:336px;width:404px;height:20px;background:#f5f5f5"></div>
<div class="ab" style="left:1020px;top:336px;width:18px;height:20px;background:#f5f5f5"></div>
<div class="t" style="left:546px;top:340px;font-size:13px">Centroid Position Y</div>
<div class="t" style="left:799px;top:340px;font-size:13px">180.4</div>
<div class="t" style="left:862px;top:340px;font-size:13px">µm</div>
<div class="ab" style="left:1024px;top:339px;width:13px;height:13px;border:1px solid #bdbdbd;background:#fff"></div>
<div class="ab" style="left:530px;top:355px;width:6px;border-top:1px solid #cfcfcf"></div>
<div class="ab" style="left:538px;top:356px;width:404px;height:20px;background:#fff"></div>
<div class="ab" style="left:1020px;top:356px;width:18px;height:20px;background:#fff"></div>
<div class="t" style="left:546px;top:360px;font-size:13px">AD Saturation</div>
<div class="t" style="left:799px;top:360px;font-size:13px">71.9</div>
<div class="t" style="left:862px;top:360px;font-size:13px">%</div>
<div class="ab" style="left:1024px;top:359px;width:13px;height:13px;border:1px solid #bdbdbd;background:#fff"></div>
<div class="ab" style="left:530px;top:375px;width:6px;border-top:1px solid #cfcfcf"></div>
<div class="ab" style="left:538px;top:376px;width:404px;height:20px;background:#f5f5f5"></div>
<div class="ab" style="left:1020px;top:376px;width:18px;height:20px;background:#f5f5f5"></div>
<div class="t" style="left:546px;top:380px;font-size:13px">Total Power</div>
<div class="t" style="left:799px;top:380px;font-size:13px">4.97</div>
<div class="t" style="left:862px;top:380px;font-size:13px">mW</div>
<div class="ab" style="left:1024px;top:379px;width:13px;height:13px;border:1px solid #bdbdbd;background:#fff"></div>
<div class="ab" style="left:530px;top:395px;width:6px;border-top:1px solid #cfcfcf"></div>
<div class="ab" style="left:538px;top:396px;width:521px;height:20px;background:#c0c0c0"></div>
<div class="t" style="left:542px;top:399px;font-size:14.8px;font-weight:bold;color:#000">Profile Measurement</div>
<div class="ab" style="left:530px;top:415px;width:6px;border-top:1px solid #cfcfcf"></div>
<div class="ab" style="left:538px;top:416px;width:404px;height:20px;background:#f5f5f5"></div>
<div class="ab" style="left:1020px;top:416px;width:18px;height:20px;background:#f5f5f5"></div>
<div class="t" style="left:546px;top:420px;font-size:13px">Beam Width Clip X (13.5%)</div>
<div class="t" style="left:799px;top:420px;font-size:13px">2681.5</div>
<div class="t" style="left:862px;top:420px;font-size:13px">µm</div>
<div class="ab" style="left:1024px;top:419px;width:13px;height:13px;border:1px solid #bdbdbd;background:#fff"></div>
<div class="ab" style="left:530px;top:435px;width:6px;border-top:1px solid #cfcfcf"></div>
<div class="ab" style="left:538px;top:436px;width:404px;height:20px;background:#fff"></div>
<div class="ab" style="left:1020px;top:436px;width:18px;height:20px;background:#fff"></div>
<div class="t" style="left:546px;top:440px;font-size:13px">Beam Width Clip Y (13.5%)</div>
<div class="t" style="left:799px;top:440px;font-size:13px">2659.3</div>
<div class="t" style="left:862px;top:440px;font-size:13px">µm</div>
<div class="ab" style="left:1024px;top:439px;width:13px;height:13px;border:1px solid #bdbdbd;background:#fff"></div>
<div class="ab" style="left:530px;top:455px;width:6px;border-top:1px solid #cfcfcf"></div>
<div class="ab" style="left:527px;top:953px;width:533px;height:16px;border:1px solid #8f8f8f;border-radius:4px;background:linear-gradient(#fdfdfd,#e9e9e9)"></div>
<div class="ab" style="left:961px;top:954px;width:84px;height:14px;background:#cfcfcf;border-left:1px solid #a8a8a8;border-right:1px solid #a8a8a8"></div>
<div class="ab" style="left:541px;top:954px;height:14px;border-left:1px solid #a8a8a8"></div>
<svg class="ab" style="left:530px;top:956px" width="8" height="10"><path d="M6 1L1.5 5L6 9z" fill="#111"/></svg>
<svg class="ab" style="left:1048px;top:956px" width="8" height="10"><path d="M2 1L6.5 5L2 9z" fill="#111"/></svg>
<div class="ab" style="left:747px;top:957px;width:6px;height:8px;border-left:1px solid #aaa;border-right:1px solid #aaa"></div><div class="ab" style="left:750px;top:957px;height:8px;border-left:1px solid #aaa"></div>
<div class="ab" style="left:1069px;top:100px;width:611px;height:437px;background:#f0f0f0;border:2px solid #777;border-top:1px solid #8a8a8a;border-bottom:1px solid #8a8a8a;border-right:2px solid #a0a0a0;border-radius:6px 6px 0 0"></div>
<div class="ab" style="left:1070px;top:101px;width:608px;height:23px;border-bottom:1px solid #8f8f8f;border-radius:6px 6px 0 0;background:linear-gradient(#fdfdfd,#f6f6f6 45%,#ececec 55%,#eeeeee)"></div>
<div class="t" style="left:1312px;top:106px;font-size:13.3px;font-weight:bold;color:#111">2D Projection</div>
<div class="ab" style="left:1616px;top:103px;width:18px;height:18px;border:1px solid #a8a8a8;border-radius:4px;background:linear-gradient(#fbfbfb,#ececec)"></div>
<div class="ab" style="left:1621px;top:114px;width:8px;height:2px;background:#000"></div>
<div class="ab" style="left:1636px;top:103px;width:18px;height:18px;border:1px solid #a8a8a8;border-radius:4px;background:linear-gradient(#fbfbfb,#ececec)"></div>
<div class="ab" style="left:1641px;top:108px;width:8px;height:8px;border:1.5px solid #000;border-top-width:2.5px"></div>
<div class="ab" style="left:1656px;top:103px;width:18px;height:18px;border:1px solid #a8a8a8;border-radius:4px;background:linear-gradient(#fbfbfb,#ececec)"></div>
<svg class="ab" style="left:1656px;top:103px" width="18" height="18"><path d="M5 5l8 8M13 5l-8 8" stroke="#000" stroke-width="2.2"/></svg>
<div class="ab" style="left:1077px;top:130px;width:49px;height:399px;border:1px solid #d6d6d6;border-left-color:#fff;border-top-color:#fff"></div>
<div class="ab" style="left:1132px;top:317px;width:12px;height:28px;border:1px solid #6f6f6f;border-radius:3px;background:linear-gradient(90deg,#fff,#eee)"></div>
<svg class="ab" style="left:1134px;top:326px" width="8" height="10"><path d="M6 1L1.5 5L6 9z" fill="#3c8fd8"/></svg>
<div class="ab" style="left:1069px;top:537px;width:611px;height:440px;background:#f0f0f0;border:2px solid #777;border-top:1px solid #8a8a8a;border-right:2px solid #a0a0a0;border-radius:6px 6px 0 0"></div>
<div class="ab" style="left:1070px;top:538px;width:608px;height:23px;border-bottom:1px solid #8f8f8f;border-radius:6px 6px 0 0;background:linear-gradient(#fdfdfd,#f6f6f6 45%,#ececec 55%,#eeeeee)"></div>
<div class="t" style="left:1323px;top:543px;font-size:13.3px;font-weight:bold;color:#111">3D Profile</div>
<div class="ab" style="left:1615px;top:540px;width:18px;height:18px;border:1px solid #a8a8a8;border-radius:4px;background:linear-gradient(#fbfbfb,#ececec)"></div>
<div class="ab" style="left:1620px;top:551px;width:8px;height:2px;background:#000"></div>
<div class="ab" style="left:1635px;top:540px;width:18px;height:18px;border:1px solid #a8a8a8;border-radius:4px;background:linear-gradient(#fbfbfb,#ececec)"></div>
<div class="ab" style="left:1640px;top:545px;width:8px;height:8px;border:1.5px solid #000;border-top-width:2.5px"></div>
<div class="ab" style="left:1655px;top:540px;width:18px;height:18px;border:1px solid #a8a8a8;border-radius:4px;background:linear-gradient(#fbfbfb,#ececec)"></div>
<svg class="ab" style="left:1655px;top:540px" width="18" height="18"><path d="M5 5l8 8M13 5l-8 8" stroke="#000" stroke-width="2.2"/></svg>
<div class="ab" style="left:1077px;top:567px;width:36px;height:404px;border:1px solid #d6d6d6;border-left-color:#fff;border-top-color:#fff"></div>
<div class="ab" style="left:1119px;top:754px;width:12px;height:28px;border:1px solid #6f6f6f;border-radius:3px;background:linear-gradient(90deg,#fff,#eee)"></div>
<svg class="ab" style="left:1121px;top:763px" width="8" height="10"><path d="M6 1L1.5 5L6 9z" fill="#3c8fd8"/></svg>
<svg class="ab" style="left:1206px;top:983px" width="10" height="14"><path d="M0.5 0.5L9 7L0.5 13.5z" fill="#3a8fd9"/></svg>
<div class="t" style="left:1220px;top:985px;font-size:11.2px;color:#111">8225</div>
<div class="t" style="left:1250px;top:985px;font-size:11.6px;color:#111">|</div>
<div class="t" style="left:1258px;top:985px;font-size:11.6px;color:#111">Attenuation: 40 dB</div>
<div class="t" style="left:1359px;top:985px;font-size:11.6px;color:#111">|</div>
<div class="t" style="left:1368px;top:985px;font-size:11.3px;color:#111">Exposure Time: 17.39 ms</div>
<div class="t" style="left:1501px;top:985px;font-size:11.6px;color:#111">|</div>
<div class="t" style="left:1509px;top:985px;font-size:11.6px;color:#111">Auto Exposure: ON</div>
<div class="t" style="left:1614px;top:985px;font-size:11.6px;color:#111">|</div>
<div class="t" style="left:1633px;top:985px;font-size:11.6px;color:#111">19.24 fps</div>
<div class="ab" style="left:1150px;top:130px;width:28px;height:384px;background:linear-gradient(#fff4ff 0%,#ffb8ff 5%,#ff30ff 11%,#ff00c8 16%,#ff0070 22%,#ff0000 30%,#ff8000 38%,#ffff00 44%,#90ff00 52%,#00ff00 60%,#00ff90 67%,#00ffff 74%,#0090ff 81%,#0000ff 88%,#000090 95%,#00001a 100%)"></div>
<div class="t" style="left:1150px;top:516px;font-size:12px;color:#222">Lin</div>
<div class="ab" style="left:1185px;top:130px;width:399px;height:399px;background:#00003a;overflow:hidden"><div class="ab" style="left:-5px;top:-6px;width:400px;height:400px;background:radial-gradient(circle at 50% 50%,#fff4ff 0,#ffd0ff 4px,#ff98ff 9px,#ff50ff 14px,#ff28d0 18px,#ff0060 21px,#ff0000 24px,#ff5000 27px,#ffd000 30px,#a0ff00 33px,#20ff00 37px,#00ff50 42px,#00ffc0 47px,#00ffff 51px,#00a0ff 55px,#0040ff 60px,#0010f0 66px,#0000d0 74px,#0000a8 85px,#000088 100px,#000068 125px,#00004e 160px,#00003e 200px)"></div></div>
<svg class="ab" style="left:1185px;top:130px" width="399" height="399"><path d="M0.5 0V399M0 398.5H399" stroke="#fff" stroke-width="1"/><path d="M0 398.5H4" stroke="#fff" stroke-width="1"/><path d="M1.5 399V395" stroke="#fff" stroke-width="1"/><path d="M0 389.5H4" stroke="#fff" stroke-width="1"/><path d="M10.5 399V395" stroke="#fff" stroke-width="1"/><path d="M0 380.5H8" stroke="#fff" stroke-width="1"/><path d="M19.5 399V391" stroke="#fff" stroke-width="1"/><path d="M0 371.5H4" stroke="#fff" stroke-width="1"/><path d="M28.5 399V395" stroke="#fff" stroke-width="1"/><path d="M0 362.5H4" stroke="#fff" stroke-width="1"/><path d="M37.5 399V395" stroke="#fff" stroke-width="1"/><path d="M0 353.5H4" stroke="#fff" stroke-width="1"/><path d="M46.5 399V395" stroke="#fff" stroke-width="1"/><path d="M0 344.5H4" stroke="#fff" stroke-width="1"/><path d="M55.5 399V395" stroke="#fff" stroke-width="1"/><path d="M0 335.5H8" stroke="#fff" stroke-width="1"/><path d="M64.5 399V391" stroke="#fff" stroke-width="1"/><path d="M0 326.5H4" stroke="#fff" stroke-width="1"/><path d="M73.5 399V395" stroke="#fff" stroke-width="1"/><path d="M0 317.5H4" stroke="#fff" stroke-width="1"/><path d="M82.5 399V395" stroke="#fff" stroke-width="1"/><path d="M0 308.5H4" stroke="#fff" stroke-width="1"/><path d="M91.5 399V395" stroke="#fff" stroke-width="1"/><path d="M0 299.5H4" stroke="#fff" stroke-width="1"/><path d="M100.5 399V395" stroke="#fff" stroke-width="1"/><path d="M0 290.5H8" stroke="#fff" stroke-width="1"/><path d="M109.5 399V391" stroke="#fff" stroke-width="1"/><path d="M0 281.5H4" stroke="#fff" stroke-width="1"/><path d="M118.5 399V395" stroke="#fff" stroke-width="1"/><path d="M0 272.5H4" stroke="#fff" stroke-width="1"/><path d="M127.5 399V395" stroke="#fff" stroke-width="1"/><path d="M0 263.5H4" stroke="#fff" stroke-width="1"/><path d="M136.5 399V395" stroke="#fff" stroke-width="1"/><path d="M0 254.5H4" stroke="#fff" stroke-width="1"/><path d="M145.5 399V395" stroke="#fff" stroke-width="1"/><path d="M0 245.5H8" stroke="#fff" stroke-width="1"/><path d="M154.5 399V391" stroke="#fff" stroke-width="1"/><path d="M0 236.5H4" stroke="#fff" stroke-width="1"/><path d="M163.5 399V395" stroke="#fff" stroke-width="1"/><path d="M0 227.5H4" stroke="#fff" stroke-width="1"/><path d="M172.5 399V395" stroke="#fff" stroke-width="1"/><path d="M0 218.5H4" stroke="#fff" stroke-width="1"/><path d="M181.5 399V395" stroke="#fff" stroke-width="1"/><path d="M0 209.5H4" stroke="#fff" stroke-width="1"/><path d="M190.5 399V395" stroke="#fff" stroke-width="1"/><path d="M0 200.5H8" stroke="#fff" stroke-width="1"/><path d="M199.5 399V391" stroke="#fff" stroke-width="1"/><path d="M0 191.5H4" stroke="#fff" stroke-width="1"/><path d="M208.5 399V395" stroke="#fff" stroke-width="1"/><path d="M0 182.5H4" stroke="#fff" stroke-width="1"/><path d="M217.5 399V395" stroke="#fff" stroke-width="1"/><path d="M0 173.5H4" stroke="#fff" stroke-width="1"/><path d="M226.5 399V395" stroke="#fff" stroke-width="1"/><path d="M0 164.5H4" stroke="#fff" stroke-width="1"/><path d="M235.5 399V395" stroke="#fff" stroke-width="1"/><path d="M0 155.5H8" stroke="#fff" stroke-width="1"/><path d="M244.5 399V391" stroke="#fff" stroke-width="1"/><path d="M0 146.5H4" stroke="#fff" stroke-width="1"/><path d="M253.5 399V395" stroke="#fff" stroke-width="1"/><path d="M0 137.5H4" stroke="#fff" stroke-width="1"/><path d="M262.5 399V395" stroke="#fff" stroke-width="1"/><path d="M0 128.5H4" stroke="#fff" stroke-width="1"/><path d="M271.5 399V395" stroke="#fff" stroke-width="1"/><path d="M0 119.5H4" stroke="#fff" stroke-width="1"/><path d="M280.5 399V395" stroke="#fff" stroke-width="1"/><path d="M0 110.5H8" stroke="#fff" stroke-width="1"/><path d="M289.5 399V391" stroke="#fff" stroke-width="1"/><path d="M0 101.5H4" stroke="#fff" stroke-width="1"/><path d="M298.5 399V395" stroke="#fff" stroke-width="1"/><path d="M0 92.5H4" stroke="#fff" stroke-width="1"/><path d="M307.5 399V395" stroke="#fff" stroke-width="1"/><path d="M0 83.5H4" stroke="#fff" stroke-width="1"/><path d="M316.5 399V395" stroke="#fff" stroke-width="1"/><path d="M0 74.5H4" stroke="#fff" stroke-width="1"/><path d="M325.5 399V395" stroke="#fff" stroke-width="1"/><path d="M0 65.5H8" stroke="#fff" stroke-width="1"/><path d="M334.5 399V391" stroke="#fff" stroke-width="1"/><path d="M0 56.5H4" stroke="#fff" stroke-width="1"/><path d="M343.5 399V395" stroke="#fff" stroke-width="1"/><path d="M0 47.5H4" stroke="#fff" stroke-width="1"/><path d="M352.5 399V395" stroke="#fff" stroke-width="1"/><path d="M0 38.5H4" stroke="#fff" stroke-width="1"/><path d="M361.5 399V395" stroke="#fff" stroke-width="1"/><path d="M0 29.5H4" stroke="#fff" stroke-width="1"/><path d="M370.5 399V395" stroke="#fff" stroke-width="1"/><path d="M0 20.5H8" stroke="#fff" stroke-width="1"/><path d="M379.5 399V391" stroke="#fff" stroke-width="1"/><path d="M0 11.5H4" stroke="#fff" stroke-width="1"/><path d="M388.5 399V395" stroke="#fff" stroke-width="1"/><path d="M0 2.5H4" stroke="#fff" stroke-width="1"/><path d="M397.5 399V395" stroke="#fff" stroke-width="1"/></svg>
<div class="t" style="left:1197px;top:144px;font-size:10.6px;color:#fff">4000</div>
<div class="t" style="left:1197px;top:189px;font-size:10.6px;color:#fff">3000</div>
<div class="t" style="left:1197px;top:234px;font-size:10.6px;color:#fff">2000</div>
<div class="t" style="left:1197px;top:279px;font-size:10.6px;color:#fff">1000</div>
<div class="t" style="left:1197px;top:324px;font-size:10.6px;color:#fff">0</div>
<div class="t" style="left:1197px;top:369px;font-size:10.6px;color:#fff">-1000</div>
<div class="t" style="left:1197px;top:414px;font-size:10.6px;color:#fff">-2000</div>
<div class="t" style="left:1197px;top:459px;font-size:10.6px;color:#fff">-3000</div>
<div class="t" style="left:1197px;top:504px;font-size:10.6px;color:#fff">-4000</div>
<div class="t" style="left:1202px;top:505px;font-size:10.6px;color:#fff;transform:translateX(-50%)">-4000</div>
<div class="t" style="left:1247px;top:505px;font-size:10.6px;color:#fff;transform:translateX(-50%)">-3000</div>
<div class="t" style="left:1292px;top:505px;font-size:10.6px;color:#fff;transform:translateX(-50%)">-2000</div>
<div class="t" style="left:1338px;top:505px;font-size:10.6px;color:#fff;transform:translateX(-50%)">-1000</div>
<div class="t" style="left:1382px;top:505px;font-size:10.6px;color:#fff;transform:translateX(-50%)">0</div>
<div class="t" style="left:1428px;top:505px;font-size:10.6px;color:#fff;transform:translateX(-50%)">1000</div>
<div class="t" style="left:1473px;top:505px;font-size:10.6px;color:#fff;transform:translateX(-50%)">2000</div>
<div class="t" style="left:1518px;top:505px;font-size:10.6px;color:#fff;transform:translateX(-50%)">3000</div>
<div class="t" style="left:1563px;top:505px;font-size:10.6px;color:#fff;transform:translateX(-50%)">4000</div>
<div class="ab" style="left:1137px;top:567px;width:28px;height:386px;background:linear-gradient(#fff4ff 0%,#ffb8ff 5%,#ff30ff 11%,#ff00c8 16%,#ff0070 22%,#ff0000 30%,#ff8000 38%,#ffff00 44%,#90ff00 52%,#00ff00 60%,#00ff90 67%,#00ffff 74%,#0090ff 81%,#0000ff 88%,#000090 95%,#00001a 100%)"></div>
<div class="t" style="left:1137px;top:955px;font-size:12px;color:#222">Lin</div>
<div class="ab" style="left:1171px;top:567px;width:500px;height:401px;background:linear-gradient(#bababa,#1a1a1a)"></div>
<svg class="ab" style="left:1171px;top:567px" width="500" height="401"><defs><linearGradient id="pk" gradientUnits="userSpaceOnUse" x1="0" y1="83" x2="0" y2="196"><stop offset="0" stop-color="#fff"/><stop offset=".071" stop-color="#ffc8ff"/><stop offset=".177" stop-color="#ff50ff"/><stop offset=".274" stop-color="#ff00a0"/><stop offset=".327" stop-color="#ff0020"/><stop offset=".398" stop-color="#ff6000"/><stop offset=".469" stop-color="#ffff00"/><stop offset=".54" stop-color="#a0ff00"/><stop offset=".646" stop-color="#00ff00"/><stop offset=".743" stop-color="#00ff90"/><stop offset=".805" stop-color="#00ffff"/><stop offset=".858" stop-color="#0090ff"/><stop offset=".9" stop-color="#0030ff"/><stop offset="1" stop-color="#0010d0" stop-opacity="0"/></linearGradient><radialGradient id="glow" cx=".5" cy=".45" r=".5"><stop offset="0" stop-color="#0028ff"/><stop offset=".35" stop-color="#0018e8"/><stop offset=".65" stop-color="#0008a0" stop-opacity=".8"/><stop offset="1" stop-color="#000058" stop-opacity="0"/></radialGradient></defs><path d="M101 142.7L338.2 155.2L309.9 258L51 242.2z" fill="#000058"/><ellipse cx="197" cy="190" rx="62" ry="27" fill="url(#glow)"/><path d="M147.0,188 151.0,185 154.0,182 157.0,179 159.5,176 162.0,173 164.5,169 167.0,164 170.2,157 173.0,150 175.3,143 177.4,136 179.2,129 181.0,122 182.5,115 184.1,108 186.2,101 188.6,94 191.0,89 193.0,86 194.5,84 197.0,83 197.0,83 199.5,84 201.0,86 203.0,89 205.4,94 207.8,101 209.9,108 211.5,115 213.0,122 214.8,129 216.6,136 218.7,143 221.0,150 223.8,157 227.0,164 229.5,169 232.0,173 234.5,176 237.0,179 240.0,182 243.0,185 247.0,188 Q197 196 147.0,188z" fill="url(#pk)"/></svg>
<div class="grip" style="left:4px;top:71px;height:22px;width:5px;background:repeating-linear-gradient(#b4b4b4 0 1px,transparent 1px 2px)"></div>
<div class="grip" style="left:50px;top:71px;height:22px;width:5px;background:repeating-linear-gradient(#b4b4b4 0 1px,transparent 1px 2px)"></div>
<div class="grip" style="left:326px;top:71px;height:22px;width:5px;background:repeating-linear-gradient(#b4b4b4 0 1px,transparent 1px 2px)"></div>
<div class="grip" style="left:668px;top:71px;height:22px;width:5px;background:repeating-linear-gradient(#b4b4b4 0 1px,transparent 1px 2px)"></div>
<div class="grip" style="left:837px;top:71px;height:22px;width:5px;background:repeating-linear-gradient(#b4b4b4 0 1px,transparent 1px 2px)"></div>
<div class="grip" style="left:957px;top:71px;height:22px;width:5px;background:repeating-linear-gradient(#b4b4b4 0 1px,transparent 1px 2px)"></div>
<div class="ab" style="left:45px;top:62px;width:1px;height:36px;background:#d8d8d8"></div><div class="ab" style="left:46px;top:62px;width:1px;height:36px;background:#fafafa"></div>
<div class="ab" style="left:171px;top:62px;width:1px;height:36px;background:#d8d8d8"></div><div class="ab" style="left:172px;top:62px;width:1px;height:36px;background:#fafafa"></div>
<div class="ab" style="left:321px;top:62px;width:1px;height:36px;background:#d8d8d8"></div><div class="ab" style="left:322px;top:62px;width:1px;height:36px;background:#fafafa"></div>
<div class="ab" style="left:664px;top:62px;width:1px;height:36px;background:#d8d8d8"></div><div class="ab" style="left:665px;top:62px;width:1px;height:36px;background:#fafafa"></div>
<div class="ab" style="left:832px;top:62px;width:1px;height:36px;background:#d8d8d8"></div><div class="ab" style="left:833px;top:62px;width:1px;height:36px;background:#fafafa"></div>
<div class="ab" style="left:952px;top:62px;width:1px;height:36px;background:#d8d8d8"></div><div class="ab" style="left:953px;top:62px;width:1px;height:36px;background:#fafafa"></div>
<div class="ab" style="left:56px;top:64px;width:35px;height:34px;border:1px solid #8c8c8c;border-radius:4px;background:#d4d4d4"></div>
<div class="ab" style="left:332px;top:64px;width:35px;height:34px;border:1px solid #8c8c8c;border-radius:4px;background:#d4d4d4"></div>
<div class="ab" style="left:369px;top:64px;width:35px;height:34px;border:1px solid #8c8c8c;border-radius:4px;background:#d4d4d4"></div>
<div class="ab" style="left:406px;top:64px;width:35px;height:34px;border:1px solid #8c8c8c;border-radius:4px;background:#d4d4d4"></div>
<div class="ab" style="left:674px;top:64px;width:35px;height:34px;border:1px solid #8c8c8c;border-radius:4px;background:#d4d4d4"></div>
<div class="ab" style="left:711px;top:64px;width:35px;height:34px;border:1px solid #8c8c8c;border-radius:4px;background:#d4d4d4"></div>
<svg class="ab" style="left:0;top:61px" width="1000" height="40"><defs><radialGradient id="pb" cx=".5" cy=".3" r=".7"><stop offset="0" stop-color="#8aa8ff"/><stop offset=".5" stop-color="#2f4fe8"/><stop offset="1" stop-color="#1a2fb0"/></radialGradient><linearGradient id="sk" x1="0" y1="0" x2="0" y2="1"><stop offset="0" stop-color="#4aa8f0"/><stop offset=".5" stop-color="#2b86d8"/><stop offset=".5" stop-color="#1c6fc4"/><stop offset="1" stop-color="#1a7ad0"/></linearGradient><linearGradient id="usb" x1="0" y1="0" x2="0" y2="1"><stop offset="0" stop-color="#7fd38b"/><stop offset=".5" stop-color="#3cae50"/><stop offset="1" stop-color="#1f9a35"/></linearGradient><linearGradient id="cone" x1="0" y1="0" x2="0" y2="1"><stop offset="0" stop-color="#fff"/><stop offset=".2" stop-color="#ff50a0"/><stop offset=".35" stop-color="#e8102a"/><stop offset=".5" stop-color="#ffd000"/><stop offset=".7" stop-color="#30c040"/><stop offset=".85" stop-color="#20a0e0"/><stop offset="1" stop-color="#3060d0"/></linearGradient><linearGradient id="tri" x1="0" y1="0" x2="0" y2="1"><stop offset="0" stop-color="#bfe8ff"/><stop offset="1" stop-color="#1a8fe0"/></linearGradient></defs><path d="M23 15.5Q22.8 10.5 27.5 10.3Q32.3 10.3 32.3 15Q32.3 18.3 29 20.3Q27.4 21.4 27.4 25" fill="none" stroke="#25358a" stroke-width="2.4" stroke-linecap="round"/><circle cx="23.6" cy="15.2" r="1.6" fill="#25358a"/><circle cx="27.4" cy="29.2" r="1.8" fill="#25358a"/><circle cx="73.5" cy="19.6" r="10.5" fill="url(#pb)" stroke="#1a2a9a" stroke-width="1"/><rect x="69" y="13.5" width="3" height="12" fill="#fff"/><rect x="75" y="13.5" width="3" height="12" fill="#fff"/><path d="M100 9L115 20L100 31z" fill="url(#sk)"/><rect x="116" y="9" width="6" height="22" fill="url(#sk)"/><rect x="136.5" y="12.5" width="21" height="16" fill="#e0e0e0" stroke="#55b8ea"/><rect x="136" y="12" width="22" height="3" fill="#55b8ea"/><path d="M149 21l5 5M154 21l-5 5" stroke="#d02020" stroke-width="1.6"/><circle cx="193" cy="19" r="11" fill="url(#usb)" stroke="#1f7030" stroke-width="1"/><circle cx="193" cy="19" r="9.5" fill="none" stroke="#a8e8b0" stroke-width=".8"/><path d="M186 19h14M189 19l3-3.5h4M191 19l3 3.5h3" stroke="#fff" stroke-width="1.1" fill="none"/><path d="M199 17l3 2l-3 2z" fill="#fff"/><circle cx="186" cy="19" r="1.4" fill="#fff"/><circle cx="196.5" cy="15.5" r="1.1" fill="#fff"/><rect x="196.5" y="21.5" width="2" height="2" fill="#fff"/><g fill="#e6e6e6" stroke="#707070" stroke-width="1.1"><circle cx="225" cy="21" r="5.5" stroke-dasharray="2 1.2"/><circle cx="235" cy="16" r="5" stroke-dasharray="2 1.2"/><circle cx="232" cy="26" r="4" stroke-dasharray="2 1.2"/></g><g fill="none" stroke="#777"><circle cx="225" cy="21" r="2"/><circle cx="235" cy="16" r="2"/></g><rect x="256" y="13" width="18" height="16" fill="#4db4e8"/><rect x="258" y="17" width="6" height="4" fill="#bde4f8"/><rect x="266" y="17" width="6" height="4" fill="#bde4f8"/><rect x="258" y="23" width="6" height="4" fill="#bde4f8"/><circle cx="271.5" cy="26.5" r="4.5" fill="#555" stroke="#333" stroke-dasharray="1.5 1"/><circle cx="271.5" cy="26.5" r="1.6" fill="#ccc"/><path d="M296 14q3-5 8-4q6-1 8 4q3 4 0 10q-1 6-8 6q-7 0-9-6q-2-5 1-10z" fill="#8cc4ec" stroke="#4f95cf"/><rect x="300" y="14" width="10" height="10" fill="#cfe6f8" stroke="#4a7ab0" stroke-width=".6"/><path d="M302 16h2v2h-2zM306 16h2v2h-2zM302 20h2v2h-2zM306 20h2v2h-2z" fill="#4a6a90"/><circle cx="349.5" cy="20.2" r="10.5" fill="#0a1a80"/><circle cx="349.5" cy="20.2" r="8.5" fill="#1060f0"/><circle cx="349.5" cy="20.2" r="7" fill="#00e0e0"/><circle cx="349.5" cy="20.2" r="5.5" fill="#30d030"/><circle cx="349.5" cy="20.2" r="4.2" fill="#f8e000"/><circle cx="349.5" cy="20.2" r="3" fill="#f02020"/><circle cx="349.5" cy="20.2" r="1.8" fill="#ff40c0"/><path d="M383 16q3-3 6 0l5 7q3 4 1 6q-3 2-9 2q-6 0-9-2q-2-2 1-6z" fill="url(#cone)"/><rect x="411.5" y="9.5" width="23" height="22" fill="#f4f8fc" stroke="#c4d0dc"/><path d="M418 13h14M418 17h14M418 21h14M418 25h14M418 29h14" stroke="#8fa4b6" stroke-width="1.8"/><path d="M416 11v20" stroke="#9a7a2a" stroke-width="1.6"/><path d="M451 29.5q4-2 6-8t4.5-9.5q2.5 0 4.5 9t5 8.5" fill="none" stroke="#2a3f8f" stroke-width="1.8"/><text x="450" y="19.5" font-family="Liberation Sans" font-weight="bold" font-size="10" fill="#2ab0e8">X</text><path d="M489 29.5q4-2 6-8t4.5-9.5q2.5 0 4.5 9t5 8.5" fill="none" stroke="#2a3f8f" stroke-width="1.8"/><text x="488" y="19.5" font-family="Liberation Sans" font-weight="bold" font-size="10" fill="#2ab0e8">Y</text><rect x="524" y="9.5" width="21" height="21" rx="2" fill="#2a2a2a"/><text x="534.5" y="18.5" text-anchor="middle" font-family="Liberation Sans" font-weight="bold" font-size="10" fill="#fff" textLength="19" lengthAdjust="spacingAndGlyphs">XYZ</text><path d="M525 29l3-3l2-1l2-5l2 6l2-2l1 2l2-3l2 3l2 1l1 1" fill="none" stroke="#e8e020" stroke-width="1.3"/><rect x="561" y="9.5" width="21" height="21" rx="2" fill="#2a2a2a"/><text x="571.5" y="18.5" text-anchor="middle" font-family="Liberation Sans" font-weight="bold" font-size="10" fill="#fff" textLength="19" lengthAdjust="spacingAndGlyphs">mW</text><path d="M562 29l3-3l2-1l2-5l2 6l2-2l1 2l2-3l2 3l2 1l1 1" fill="none" stroke="#e8e020" stroke-width="1.3"/><rect x="598" y="9" width="21" height="21" rx="2" fill="#2a2a2a"/><ellipse cx="608.5" cy="20" rx="6" ry="5" fill="none" stroke="#ddd" stroke-width=".8"/><g fill="#eee"><circle cx="606" cy="18.5" r=".9"/><circle cx="610" cy="18" r=".9"/><circle cx="608" cy="21.5" r=".9"/><circle cx="609" cy="11" r=".8"/><circle cx="615" cy="12" r=".8"/><circle cx="604" cy="27" r=".8"/><circle cx="614" cy="27" r=".8"/></g><text x="634" y="27.5" font-family="Liberation Sans" font-weight="bold" font-size="19.5" fill="#1f3a9a" textLength="17" lengthAdjust="spacingAndGlyphs">M</text><text x="651" y="19.5" font-family="Liberation Sans" font-weight="bold" font-size="8.5" fill="#1f3a9a">2</text><path d="M683 20q0-9 8-9t8 9z" fill="#7a7a7a"/><ellipse cx="691" cy="18" rx="3.5" ry="2.5" fill="#f0e080"/><text x="691" y="30" text-anchor="middle" font-family="Liberation Sans" font-weight="bold" font-size="8.5" fill="#4b50a0">Auto</text><path d="M723 10h-5v20h5" fill="none" stroke="#7a7a7a" stroke-width="1.3"/><path d="M727 15q3-3.5 7 0l5 7q3.5 4.5 1 7q-3 2.5-9.5 2.5q-6.5 0-9.5-2.5q-2.5-2.5 1-7z" fill="url(#cone)"/><path d="M762 11q2-2 4 0l4 19h-12z" fill="url(#tri)"/><path d="M755 30l10-20l10 20" fill="none" stroke="#222" stroke-width="1.4" stroke-dasharray="2 1.5"/><path d="M754 30.5h22" stroke="#222" stroke-width="1"/><rect x="793.5" y="11.5" width="18" height="18" fill="#f0f0f8" stroke="#3a4ec0" stroke-width="1.6"/><path d="M797 17v-3h3M805 14h3v3M808 24v3h-3M800 27h-3v-3" fill="none" stroke="#3a4ec0" stroke-width="1.6"/><path d="M821 17h9l-4.5 5z" fill="#000"/><path d="M849 14l22-7M849 19l22 6" stroke="#5ac0e8" stroke-width="1.3"/><text x="860" y="20" font-family="Liberation Serif" font-size="9" fill="#222">θ)</text><text x="851" y="30" font-family="Liberation Sans" font-weight="bold" font-size="8" fill="#3a4aa0">Man.</text><path d="M887 25a10.5 10.5 0 0 1 21 0z" fill="#f4f4f4" stroke="#444" stroke-width="1.2"/><path d="M897 23l7-5" stroke="#d04040" stroke-width="1"/><circle cx="897" cy="24" r="1.5" fill="#444"/><circle cx="937.5" cy="17" r="7" fill="#ee1c24"/><circle cx="931" cy="23.5" r="7" fill="#ee1c24"/><circle cx="934" cy="20" r="3" fill="#d01a2a" opacity=".6"/></svg>
<svg class="ab" style="left:1555px;top:28px" width="122" height="22"><text x="2" y="19.6" font-family="Liberation Sans" font-weight="bold" font-size="23" fill="#d8101c" stroke="#d8101c" stroke-width="1.3" stroke-linejoin="round" textLength="61" lengthAdjust="spacingAndGlyphs">THOR</text><text x="64.5" y="19.6" font-family="Liberation Sans" font-weight="bold" font-size="23" fill="#fbeef0" stroke="#d01020" stroke-width="1.1" textLength="53" lengthAdjust="spacingAndGlyphs">LABS</text></svg>
<svg class="ab" style="left:4px;top:5px" width="14" height="14"><path d="M5.5 3q1.5-2 3 0l3 6q1 4-4 4h-1q-5 0-4-4z" fill="url(#cone)"/></svg>
<svg class="ab" style="left:471px;top:138px" width="23" height="23"><path d="M0.5 1.5h13l3 3v17h-16z" fill="#3e3e3e"/><rect x="3" y="1.5" width="8" height="7" fill="#bdbdbd"/><rect x="8" y="2.5" width="2" height="5" fill="#3e3e3e"/><rect x="2" y="11" width="10" height="9.5" fill="#3aa8e0"/><path d="M3 13h8M3 15.5h8" stroke="#d8f0fc"/><path d="M10 7.5h8l4 4v11h-12z" fill="#e8e8e8" stroke="#aaa" stroke-width=".6"/><path d="M12 12h8M12 14h8M12 16h8M12 18h8M12 20h8" stroke="#b0b0b0" stroke-width=".8"/></svg>
<div class="ab" style="left:471px;top:172px;width:23px;border-top:1px solid #dadada"></div>
<svg class="ab" style="left:471px;top:186px" width="23" height="19"><path d="M3 9V5a4.5 4.5 0 0 1 9 0" fill="none" stroke="#a8a8a8" stroke-width="2.2"/><rect x="8" y="8" width="14" height="10" rx="1" fill="#f0a818"/><rect x="8" y="8" width="14" height="4" fill="#f8c848"/><rect x="14" y="11" width="2" height="4" fill="#333"/></svg>
<svg class="ab" style="left:471px;top:223px" width="23" height="22"><path d="M1 6h7l2 2h9v12H1z" fill="#e8d890"/><path d="M2 10h19l-3 10H1z" fill="#f8eeb8" stroke="#c8b060" stroke-width=".5"/><path d="M12 3q6-1 8 6l2-1l-2 5l-4-3l2 0q-2-4-6-4z" fill="#30a040"/><path d="M5 16l2.5 2.5l4-4" stroke="#30b030" stroke-width="1.8" fill="none"/><path d="M15 14l5 5M20 14l-5 5" stroke="#e02020" stroke-width="1.6"/></svg>
<svg class="ab" style="left:471px;top:260px" width="23" height="23"><path d="M0.5 1.5h19l3 3v17h-22z" fill="#3e3e3e"/><rect x="3" y="1.5" width="8" height="7" fill="#bdbdbd"/><rect x="8" y="2.5" width="2" height="5" fill="#3e3e3e"/><rect x="2" y="11" width="19" height="9" fill="#e8f4fa"/><rect x="2" y="19" width="19" height="2.5" fill="#3aa8e0"/><path d="M4 15l2.5 2.5l4-5" stroke="#20a030" stroke-width="1.8" fill="none"/><path d="M13 12.5l5 5M18 12.5l-5 5" stroke="#e02020" stroke-width="1.6"/></svg>
<svg class="ab" style="left:1076px;top:104px" width="15" height="15"><circle cx="7.5" cy="7.5" r="7" fill="#1a2a90"/><circle cx="7.5" cy="7.5" r="5.5" fill="#18c0e0"/><circle cx="7.5" cy="7.5" r="4.3" fill="#40c040"/><circle cx="7.5" cy="7.5" r="3.2" fill="#f0e020"/><circle cx="7.5" cy="7.5" r="2.2" fill="#f02828"/><circle cx="7.5" cy="7.5" r="1.2" fill="#ff60d0"/></svg>
<svg class="ab" style="left:1090px;top:138px" width="23" height="23"><path d="M0.5 1.5h13l3 3v17h-16z" fill="#3e3e3e"/><rect x="3" y="1.5" width="8" height="7" fill="#bdbdbd"/><rect x="8" y="2.5" width="2" height="5" fill="#3e3e3e"/><rect x="2" y="11" width="10" height="9.5" fill="#3aa8e0"/><path d="M3 13h8M3 15.5h8" stroke="#d8f0fc"/><path d="M11 8.5h7l3 3v10.5h-10z" fill="#fff" stroke="#aaa" stroke-width=".6"/><path d="M12 21l3-5l2 2l2-3l2 3v3z" fill="#1a9a50"/><circle cx="14" cy="13" r="1.2" fill="#f0b020"/></svg>
<div class="ab" style="left:1084px;top:170px;width:35px;height:34px;border:1px solid #8c8c8c;border-radius:4px;background:#d4d4d4"></div>
<div class="ab" style="left:1084px;top:208px;width:35px;height:34px;border:1px solid #8c8c8c;border-radius:4px;background:#d4d4d4"></div>
<svg class="ab" style="left:1090px;top:175px" width="24" height="24"><path d="M2.5 2v19h20" fill="none" stroke="#333" stroke-width="1"/><path d="M1 5h2M1 9h2M1 13h2M1 17h2M6 22v-2M10 22v-2M14 22v-2M18 22v-2" stroke="#333" stroke-width=".8"/><path d="M3 20q4 0 6-6t4-11q2 0 4 8t5 9" fill="none" stroke="#d02830" stroke-width="1.3"/></svg>
<svg class="ab" style="left:1089px;top:213px" width="24" height="24"><defs><radialGradient id="hw" cx=".45" cy=".5" r=".5"><stop offset="0" stop-color="#fff" stop-opacity=".95"/><stop offset=".6" stop-color="#fff" stop-opacity="0"/></radialGradient></defs><path d="M12 12L6.5 2.5H17.5z" fill="#e8a020"/><path d="M12 12L17.5 2.5L23 12z" fill="#a8a8a8"/><path d="M12 12L23 12L17.5 21.5z" fill="#555"/><path d="M12 12L17.5 21.5H6.5z" fill="#2a5ad8"/><path d="M12 12L6.5 21.5L1 12z" fill="#20b8c8"/><path d="M12 12L1 12L6.5 2.5z" fill="#40c030"/><path d="M12 12L6.5 2.5L4 7z" fill="#e02020" opacity=".8"/><circle cx="11" cy="12" r="10" fill="url(#hw)"/><path d="M6.5 2.5h11l5.5 9.5l-5.5 9.5h-11l-5.5-9.5z" fill="none" stroke="#333" stroke-width=".7"/></svg>
<svg class="ab" style="left:1090px;top:252px" width="23" height="23"><path d="M8 1h7v7h7v7h-7v7H8v-7H1V8h7z" fill="#28a048"/></svg>
<svg class="ab" style="left:1084px;top:290px" width="40" height="22"><circle cx="10.8" cy="10.7" r="7.5" fill="none" stroke="#2a3f9a" stroke-width="2"/><path d="M10.8 1v19.5M1 10.7h19.5" stroke="#2a3f9a" stroke-width="2"/><path d="M30 8h8l-4 5z" fill="#000"/></svg>
<svg class="ab" style="left:1089px;top:328px" width="25" height="22"><ellipse cx="12" cy="11" rx="10.5" ry="7" transform="rotate(-25 12 11)" fill="none" stroke="#209a40" stroke-width="4.5"/></svg>
<svg class="ab" style="left:1090px;top:366px" width="23" height="22"><path d="M1 2h11l4 4v15H1z" fill="#f6f6f6" stroke="#ccc" stroke-width=".7"/><path d="M2 13h8M2 11v4" stroke="#333" stroke-width="1"/><path d="M8 14l11-11l2.5 2.5l-11 11l-3.5 1z" fill="#f0c040" stroke="#a07020" stroke-width=".6"/></svg>
<div class="ab" style="left:1084px;top:400px;width:35px;border-top:1px solid #dcdcdc"></div>
<svg class="ab" style="left:1083px;top:411px" width="42" height="24"><rect x="2" y="2" width="20" height="20" fill="none" stroke="#2a3f9a" stroke-width="2"/><path d="M12 2v20M2 12h20" stroke="#2a3f9a" stroke-width="2"/><path d="M31 9h8l-4 5z" fill="#000"/></svg>
<svg class="ab" style="left:1083px;top:449px" width="42" height="24"><rect x="2" y="2" width="20" height="20" fill="none" stroke="#2a3f9a" stroke-width="2"/><path d="M31 9h8l-4 5z" fill="#000"/></svg>
<svg class="ab" style="left:1096px;top:518px" width="10" height="10"><path d="M1.5 1.5l3 3l3-3M1.5 5.5l3 3l3-3" fill="none" stroke="#111" stroke-width="1.4"/></svg>
<svg class="ab" style="left:1075px;top:543px" width="14" height="15" viewBox="0 0 20 20"><path d="M7 3q3-2.5 6 0l5.5 10q2 6-8.5 6q-10.5 0-8.5-6z" fill="url(#cone)"/></svg>
<svg class="ab" style="left:1083px;top:575px" width="23" height="23"><path d="M0.5 1.5h13l3 3v17h-16z" fill="#3e3e3e"/><rect x="3" y="1.5" width="8" height="7" fill="#bdbdbd"/><rect x="8" y="2.5" width="2" height="5" fill="#3e3e3e"/><rect x="2" y="11" width="10" height="9.5" fill="#3aa8e0"/><path d="M3 13h8M3 15.5h8" stroke="#d8f0fc"/><path d="M11 8.5h7l3 3v10.5h-10z" fill="#fff" stroke="#aaa" stroke-width=".6"/><path d="M12 21l3-5l2 2l2-3l2 3v3z" fill="#1a9a50"/><circle cx="14" cy="13" r="1.2" fill="#f0b020"/></svg>
<svg class="ab" style="left:1084px;top:615px" width="19" height="20" viewBox="0 0 20 20"><path d="M7 3q3-2.5 6 0l5.5 10q2 6-8.5 6q-10.5 0-8.5-6z" fill="url(#cone)"/></svg>
<svg class="ab" style="left:1095px;top:625px" width="11" height="11"><circle cx="5.5" cy="5.5" r="4" fill="#666" stroke="#fff" stroke-dasharray="1.6 1"/><circle cx="5.5" cy="5.5" r="1.5" fill="#fff"/></svg>
<svg class="ab" style="left:1085px;top:653px" width="18" height="20" viewBox="0 0 20 20"><path d="M7 3q3-2.5 6 0l5.5 10q2 6-8.5 6q-10.5 0-8.5-6z" fill="url(#cone)"/></svg>
<svg class="ab" style="left:1083px;top:689px" width="23" height="23"><path d="M11.5 1v5M11.5 17v5M1 11.5h5M17 11.5h5" stroke="#2a3f8a" stroke-width="1.2"/><path d="M11.5 0l-2 3h4zM11.5 23l-2-3h4zM0 11.5l3-2v4zM23 11.5l-3-2v4z" fill="#2a3f8a"/><path d="M10 7q1.5-1 3 0l3 6q1 3-4.5 3q-5.5 0-4.5-3z" fill="url(#cone)"/></svg>
<div class="t" style="left:0;top:0;display:none">end</div>
</body></html>
